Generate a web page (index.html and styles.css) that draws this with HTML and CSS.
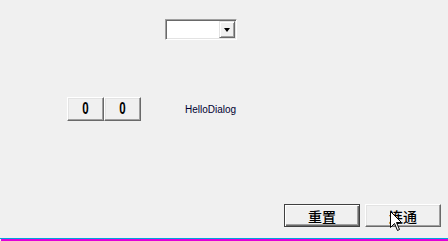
FILE: index.html
```html
<!DOCTYPE html>
<html>
<head>
<meta charset="utf-8">
<link rel="stylesheet" href="styles.css">
</head>
<body>
<div class="dialog">
  <div class="main">
    <div class="row-combo">
      <div class="combo">
        <div class="combo-field"></div>
        <div class="combo-btn"><span class="arrow"></span></div>
      </div>
    </div>
    <div class="row-mid">
      <div class="zeros">
        <button class="btn zero"><span class="digit">0</span></button>
        <button class="btn zero"><span class="digit">0</span></button>
      </div>
      <span class="label">HelloDialog</span>
    </div>
  </div>
  <div class="row-actions">
    <button class="btn action default">重置</button>
    <button class="btn action">连通</button>
  </div>
  <div class="bottom-lines">
    <div class="line-cyan"></div>
    <div class="line-magenta"></div>
  </div>
  <svg class="cursor" width="12" height="20" viewBox="0 0 12 20">
    <path d="M0.5 0.5 L0.5 16.5 L4.5 12.5 L7.5 19.5 L9.5 18.5 L6.5 11.5 L11.5 11.5 Z" fill="#fff" stroke="#000" stroke-width="1"/>
  </svg>
</div>
</body>
</html>
```

FILE: styles.css
```css
html, body {
  margin: 0;
  padding: 0;
  background: #f0f0f0;
}
.dialog {
  position: relative;
  width: 448px;
  height: 241px;
  display: flex;
  flex-direction: column;
  overflow: hidden;
}
.main {
  flex: 1;
  display: flex;
  flex-direction: column;
}
.row-combo {
  padding: 19px 0 0 165px;
}
.combo {
  display: flex;
  width: 72px;
  height: 21px;
  box-sizing: border-box;
  border-top: 1px solid #a0a0a0;
  border-left: 1px solid #a0a0a0;
  border-right: 1px solid #fff;
  border-bottom: 1px solid #fff;
  background: #fff;
  box-shadow: inset 1px 1px 0 #696969, inset -1px -1px 0 #e3e3e3;
  padding: 1px;
}
.combo-field {
  flex: 1;
  background: #fff;
}
.combo-btn {
  width: 16px;
  box-sizing: border-box;
  background: #f0f0f0;
  border-top: 1px solid #e3e3e3;
  border-left: 1px solid #e3e3e3;
  border-right: 1px solid #696969;
  border-bottom: 1px solid #696969;
  box-shadow: inset 1px 1px 0 #fff, inset -1px -1px 0 #a0a0a0;
  display: flex;
  align-items: center;
  justify-content: center;
}
.arrow {
  width: 0;
  height: 0;
  border-left: 3.5px solid transparent;
  border-right: 3.5px solid transparent;
  border-top: 4px solid #000;
}
.row-mid {
  display: flex;
  align-items: center;
  padding: 57px 0 0 67px;
}
.zeros {
  display: flex;
}
.btn {
  margin: 0;
  padding: 0;
  background: #f0f0f0;
  box-sizing: border-box;
  border-top: 1px solid #fff;
  border-left: 1px solid #fff;
  border-right: 1px solid #696969;
  border-bottom: 1px solid #696969;
  box-shadow: inset -1px -1px 0 #a0a0a0, inset 1px 1px 0 #e3e3e3;
  color: #000;
  cursor: default;
}
.zero {
  width: 37px;
  height: 24px;
  font-family: "Liberation Sans", Arial, sans-serif;
  font-weight: bold;
  font-size: 16px;
  line-height: 1;
}
.digit {
  display: inline-block;
  transform: scaleX(0.72);
}
.label {
  margin-left: 44px;
  font-family: "Liberation Sans", Arial, sans-serif;
  font-size: 10px;
  color: #000030;
}
.row-actions {
  display: flex;
  justify-content: flex-end;
  gap: 5px;
  padding: 0 7px 11px 0;
}
.action {
  width: 76px;
  height: 23px;
  font-family: "Noto Sans CJK SC", sans-serif;
  font-size: 14px;
  font-weight: 500;
  line-height: 1;
}
.action.default {
  border: 1px solid #404040;
  box-shadow: inset 1px 1px 0 #fff, inset -1px -1px 0 #696969, inset -2px -2px 0 #a0a0a0;
}
.bottom-lines {
  display: flex;
  flex-direction: column;
}
.line-cyan {
  height: 1px;
  background: #00a0e0;
}
.line-magenta {
  height: 2px;
  margin-left: 1px;
  background: #e000d8;
}
.cursor {
  position: absolute;
  left: 390px;
  top: 211px;
}
```
